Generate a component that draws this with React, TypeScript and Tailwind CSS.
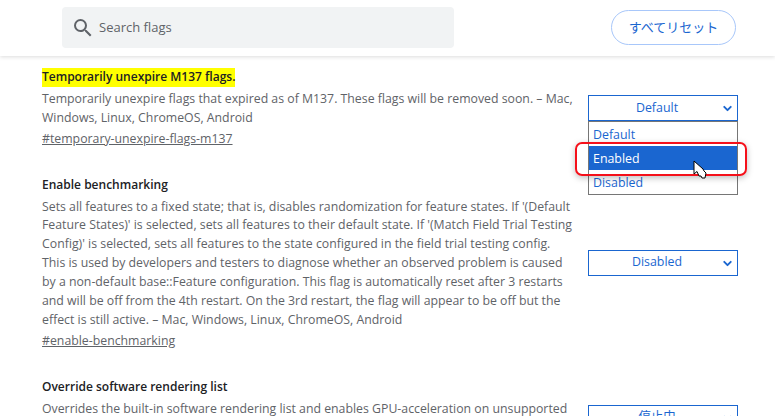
import { ChevronDown } from 'lucide-react';

const FONT = "font-['Open_Sans','Noto_Sans_CJK_JP',sans-serif]";

type Flag = {
  title: string;
  lines: string[];
  link?: string;
  value: string;
  selectTop: string;
  highlight?: boolean;
};

const FLAGS: Flag[] = [
  {
    title: 'Temporarily unexpire M137 flags.',
    highlight: true,
    lines: [
      'Temporarily unexpire flags that expired as of M137. These flags will be removed soon. – Mac,',
      'Windows, Linux, ChromeOS, Android',
    ],
    link: '#temporary-unexpire-flags-m137',
    value: 'Default',
    selectTop: 'mt-[27px]',
  },
  {
    title: 'Enable benchmarking',
    lines: [
      "Sets all features to a fixed state; that is, disables randomization for feature states. If '(Default",
      "Feature States)' is selected, sets all features to their default state. If '(Match Field Trial Testing",
      "Config)' is selected, sets all features to the state configured in the field trial testing config.",
      'This is used by developers and testers to diagnose whether an observed problem is caused',
      'by a non-default base::Feature configuration. This flag is automatically reset after 3 restarts',
      'and will be off from the 4th restart. On the 3rd restart, the flag will appear to be off but the',
      'effect is still active. – Mac, Windows, Linux, ChromeOS, Android',
    ],
    link: '#enable-benchmarking',
    value: 'Disabled',
    selectTop: 'mt-[74px]',
  },
  {
    title: 'Override software rendering list',
    lines: ['Overrides the built-in software rendering list and enables GPU-acceleration on unsupported'],
    value: '停止中',
    selectTop: 'mt-[27px]',
  },
];

function SelectBox({ value }: { value: string }) {
  return (
    <div className="relative flex h-[26px] w-[150px] items-center justify-center border border-[#1a66d0] pr-[12px] text-[12.4px] text-[#1a66d0]">
      {value}
      <ChevronDown size={13} strokeWidth={3.5} className="absolute right-[3px] top-[6px]" />
    </div>
  );
}

function DefaultDropdown() {
  return (
    <div className="absolute left-0 top-[26px] z-10 flex h-[74px] w-[150px] flex-col border border-[#767676] bg-white text-[12.4px] text-[#1a66d0]">
      <div className="flex h-[24px] items-center pl-[4px] pt-[2px]">Default</div>
      <div className="flex h-[24px] items-center bg-[#1a66d0] pl-[4px] pt-[2px] text-white">Enabled</div>
      <div className="flex h-[24px] items-center pl-[4px] pt-[2px]">Disabled</div>
    </div>
  );
}

function Cursor() {
  return (
    <svg width="16" height="20" viewBox="0 0 16 20" className="absolute left-[693px] top-[160px] z-30">
      <path
        d="M1 1 L1 14 L4 11.5 L6 16 L8 16 L9 18 L12 18 L13 13 L11 11 L10 9 Z"
        fill="#fff"
        stroke="#000"
        strokeWidth="1"
      />
    </svg>
  );
}

export default function App() {
  return (
    <div className={`relative h-[416px] w-[775px] overflow-hidden bg-white ${FONT}`}>
      <header className="flex h-[56px] items-start justify-between pl-[62px] pr-[39px] pt-[7px] shadow-[0_1px_4px_rgba(0,0,0,0.14)]">
        <div className="flex h-[41px] w-[392px] items-center rounded bg-[#f1f3f4] pl-[9px] text-[13px] text-[#5f6368]">
          <svg width="24" height="24" viewBox="0 0 24 24" fill="#5f6368" className="mr-[4px]">
            <path d="M15.5 14h-.79l-.28-.27A6.471 6.471 0 0 0 16 9.5 6.5 6.5 0 1 0 9.5 16c1.61 0 3.09-.59 4.23-1.57l.27.28v.79l5 4.99L20.49 19l-4.99-5zm-6 0C7.01 14 5 11.99 5 9.5S7.01 5 9.5 5 14 7.01 14 9.5 11.99 14 9.5 14z" />
          </svg>
          Search flags
        </div>
        <button className="mt-[3px] h-[35px] w-[125px] rounded-full border border-[#a8c7fa] text-[13px] text-[#1a66d0]">
          すべてリセット
        </button>
      </header>

      <main className="flex flex-col gap-[27px] pl-[42px] pr-[37px] pt-[12px]">
        {FLAGS.map(flag => (
          <section key={flag.title} className="flex items-start justify-between">
            <div className="w-[532px] whitespace-nowrap text-[12.3px] leading-[18.9px] text-[#5f6368]">
              <h2 className="mb-[3px] text-[12px] font-semibold text-[#202124]">
                <span className={flag.highlight ? 'inline-block bg-[#ffff00]' : 'inline-block'}>{flag.title}</span>
              </h2>
              {flag.lines.map(line => (
                <p key={line}>{line}</p>
              ))}
              {flag.link && <a className="mt-[2px] block underline">{flag.link}</a>}
            </div>
            <div className={`relative ${flag.selectTop}`}>
              <SelectBox value={flag.value} />
              {flag.highlight && <DefaultDropdown />}
            </div>
          </section>
        ))}
      </main>

      <div className="absolute left-[575px] top-[142px] z-20 h-[34px] w-[172px] rounded-[7px] border-2 border-[#f5101a] shadow-[0_2px_6px_rgba(0,0,0,0.25)]" />
      <Cursor />
    </div>
  );
}
